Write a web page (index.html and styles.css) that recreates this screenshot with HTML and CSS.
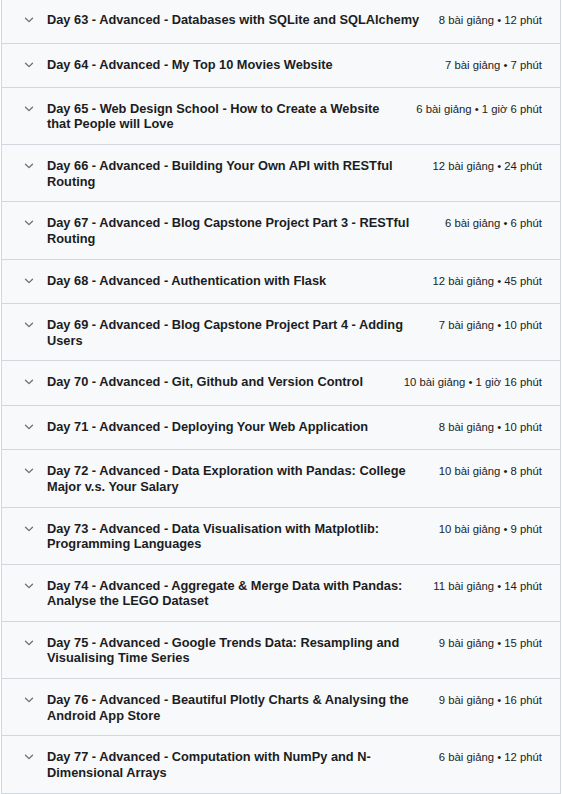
FILE: index.html
```html
<!DOCTYPE html>
<html lang="vi">
<head>
<meta charset="utf-8">
<title>Curriculum</title>
<link rel="stylesheet" href="styles.css">
</head>
<body>
<div class="curriculum">
  <div class="section"><svg class="chev" viewBox="0 0 10 18" width="10" height="18"><path d="M1.5 6.2 L5 9.6 L8.5 6.2"/></svg><span class="title">Day 63 - Advanced - Databases with SQLite and SQLAlchemy</span><span class="meta">8 bài giảng • 12 phút</span></div>
  <div class="section"><svg class="chev" viewBox="0 0 10 18" width="10" height="18"><path d="M1.5 6.2 L5 9.6 L8.5 6.2"/></svg><span class="title">Day 64 - Advanced - My Top 10 Movies Website</span><span class="meta">7 bài giảng • 7 phút</span></div>
  <div class="section"><svg class="chev" viewBox="0 0 10 18" width="10" height="18"><path d="M1.5 6.2 L5 9.6 L8.5 6.2"/></svg><span class="title">Day 65 - Web Design School - How to Create a Website that People will Love</span><span class="meta">6 bài giảng • 1 giờ 6 phút</span></div>
  <div class="section"><svg class="chev" viewBox="0 0 10 18" width="10" height="18"><path d="M1.5 6.2 L5 9.6 L8.5 6.2"/></svg><span class="title">Day 66 - Advanced - Building Your Own API with RESTful Routing</span><span class="meta">12 bài giảng • 24 phút</span></div>
  <div class="section"><svg class="chev" viewBox="0 0 10 18" width="10" height="18"><path d="M1.5 6.2 L5 9.6 L8.5 6.2"/></svg><span class="title">Day 67 - Advanced - Blog Capstone Project Part 3 - RESTful Routing</span><span class="meta">6 bài giảng • 6 phút</span></div>
  <div class="section"><svg class="chev" viewBox="0 0 10 18" width="10" height="18"><path d="M1.5 6.2 L5 9.6 L8.5 6.2"/></svg><span class="title">Day 68 - Advanced - Authentication with Flask</span><span class="meta">12 bài giảng • 45 phút</span></div>
  <div class="section"><svg class="chev" viewBox="0 0 10 18" width="10" height="18"><path d="M1.5 6.2 L5 9.6 L8.5 6.2"/></svg><span class="title">Day 69 - Advanced - Blog Capstone Project Part 4 - Adding Users</span><span class="meta">7 bài giảng • 10 phút</span></div>
  <div class="section"><svg class="chev" viewBox="0 0 10 18" width="10" height="18"><path d="M1.5 6.2 L5 9.6 L8.5 6.2"/></svg><span class="title">Day 70 - Advanced - Git, Github and Version Control</span><span class="meta">10 bài giảng • 1 giờ 16 phút</span></div>
  <div class="section"><svg class="chev" viewBox="0 0 10 18" width="10" height="18"><path d="M1.5 6.2 L5 9.6 L8.5 6.2"/></svg><span class="title">Day 71 - Advanced - Deploying Your Web Application</span><span class="meta">8 bài giảng • 10 phút</span></div>
  <div class="section"><svg class="chev" viewBox="0 0 10 18" width="10" height="18"><path d="M1.5 6.2 L5 9.6 L8.5 6.2"/></svg><span class="title">Day 72 - Advanced - Data Exploration with Pandas: College Major v.s. Your Salary</span><span class="meta">10 bài giảng • 8 phút</span></div>
  <div class="section"><svg class="chev" viewBox="0 0 10 18" width="10" height="18"><path d="M1.5 6.2 L5 9.6 L8.5 6.2"/></svg><span class="title">Day 73 - Advanced - Data Visualisation with Matplotlib: Programming Languages</span><span class="meta">10 bài giảng • 9 phút</span></div>
  <div class="section"><svg class="chev" viewBox="0 0 10 18" width="10" height="18"><path d="M1.5 6.2 L5 9.6 L8.5 6.2"/></svg><span class="title">Day 74 - Advanced - Aggregate &amp; Merge Data with Pandas: Analyse the LEGO Dataset</span><span class="meta">11 bài giảng • 14 phút</span></div>
  <div class="section"><svg class="chev" viewBox="0 0 10 18" width="10" height="18"><path d="M1.5 6.2 L5 9.6 L8.5 6.2"/></svg><span class="title">Day 75 - Advanced - Google Trends Data: Resampling and Visualising Time Series</span><span class="meta">9 bài giảng • 15 phút</span></div>
  <div class="section"><svg class="chev" viewBox="0 0 10 18" width="10" height="18"><path d="M1.5 6.2 L5 9.6 L8.5 6.2"/></svg><span class="title">Day 76 - Advanced - Beautiful Plotly Charts &amp; Analysing the Android App Store</span><span class="meta">9 bài giảng • 16 phút</span></div>
  <div class="section"><svg class="chev" viewBox="0 0 10 18" width="10" height="18"><path d="M1.5 6.2 L5 9.6 L8.5 6.2"/></svg><span class="title">Day 77 - Advanced - Computation with NumPy and N-Dimensional Arrays</span><span class="meta">6 bài giảng • 12 phút</span></div>
</div>
</body>
</html>
```

FILE: styles.css
```css
html, body {
  margin: 0;
  padding: 0;
  background: #ffffff;
}

body {
  font-family: "Liberation Sans", Arial, sans-serif;
  color: #1c1d1f;
}

.curriculum {
  margin: -2px 1px 0 1px;
  border: 1px solid #d1d7dc;
  border-bottom: none;
  background: #f7f9fa;
}

.section {
  display: flex;
  align-items: flex-start;
  padding: 13px 18px 12.5px 22px;
  border-bottom: 1px solid #d1d7dc;
}

.chev {
  flex-shrink: 0;
  margin-right: 13px;
  fill: none;
  stroke: #6a6f73;
  stroke-width: 1.3;
  stroke-linecap: round;
  stroke-linejoin: round;
}

.title {
  flex: 1 1 auto;
  min-width: 0;
  font-size: 12.8px;
  font-weight: 700;
  line-height: 15.36px;
  color: #1c1d1f;
}

.meta {
  flex-shrink: 0;
  margin-left: 16px;
  font-size: 11.3px;
  line-height: 16.5px;
  white-space: nowrap;
  color: #1c1d1f;
}
```
